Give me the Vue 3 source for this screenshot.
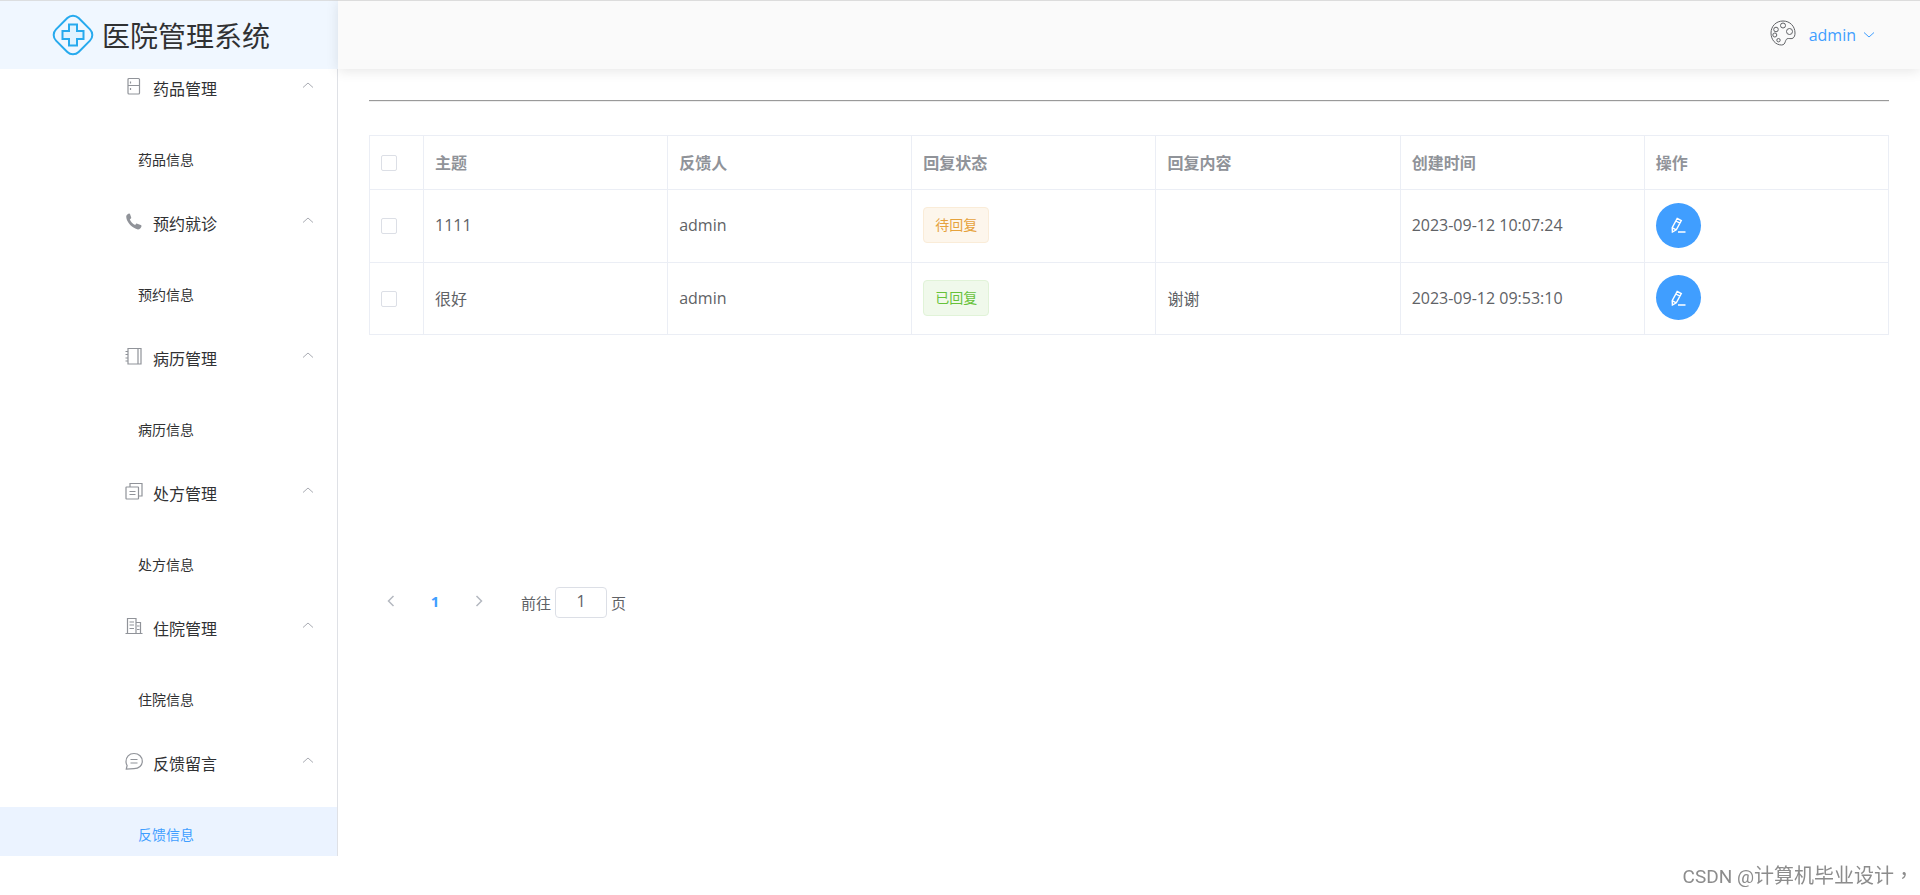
<script setup>
import { ref } from 'vue'

const groups = [
  { icon: 'fridge', title: '药品管理', child: '药品信息' },
  { icon: 'phone', title: '预约就诊', child: '预约信息' },
  { icon: 'notebook', title: '病历管理', child: '病历信息' },
  { icon: 'copy', title: '处方管理', child: '处方信息' },
  { icon: 'building', title: '住院管理', child: '住院信息' },
  { icon: 'chat', title: '反馈留言', child: '反馈信息', active: true }
]

const rows = ref([
  { id: 1, subject: '1111', user: 'admin', status: '待回复', type: 'warning', reply: '', time: '2023-09-12 10:07:24', checked: false },
  { id: 2, subject: '很好', user: 'admin', status: '已回复', type: 'success', reply: '谢谢', time: '2023-09-12 09:53:10', checked: false }
])
const allChecked = ref(false)
const page = ref('1')

function toggleAll() {
  rows.value.forEach((row) => { row.checked = allChecked.value })
}
</script>

<template>
  <div class="layout">
    <aside class="sidebar">
      <div class="brand">
        <svg class="brand-logo" viewBox="0 0 42 42" aria-hidden="true">
          <rect x="5" y="5" width="32" height="32" rx="8" transform="rotate(45 21 21)" />
          <path class="cross" d="M17 10.500h8v6.500h6.500v8H25v6.500h-8V25h-6.500v-8H17z" />
        </svg>
        <span class="brand-name">医院管理系统</span>
      </div>
      <div class="menu-view">
        <nav class="menu">
          <div v-for="group in groups" :key="group.title">
            <button type="button" class="menu-title" aria-expanded="true">
              <svg class="menu-icon" viewBox="0 0 18 18" aria-hidden="true">
                <g v-if="group.icon === 'fridge'">
                  <rect x="3" y="1.500" width="11.500" height="15.500" rx="1" />
                  <path d="M3 8.500h11.500M5.500 4.500v2M5.500 11v2" />
                </g>
                <path
                  v-else-if="group.icon === 'phone'"
                  class="solid"
                  d="M1.200 4.800C1.300 3.200 2.500 2 4 1.600c.5-.1.900.1 1.100.6l1.100 3.200c.1.500 0 .9-.4 1.200l-1 .8c1.200 2.400 2.800 4.300 5.300 5.500l.9-.9c.3-.4.7-.5 1.200-.3l3.600 1.300c.6.200.8.600.7 1.200-.5 1.700-1.700 3.100-3.600 3.200C7.700 16.400 1.500 10.800 1.200 4.800z"
                />
                <g v-else-if="group.icon === 'notebook'">
                  <path d="M3 1.500h13v15.500H3zM13 1.500v15.500M.500 4.500h3M.500 7.500h3M.500 11h3M.500 14h3" />
                </g>
                <g v-else-if="group.icon === 'copy'">
                  <rect x="1" y="5" width="12.500" height="12" rx=".5" />
                  <path d="M5 5V1.500h12v12.500h-3.500M4.500 9.500h6M4.500 12.500h6" />
                </g>
                <g v-else-if="group.icon === 'building'">
                  <path d="M.500 16.500h17M2.500 16.500v-15h8.500v15M11 5.500h4.500v11M4.500 5h4.500M4.500 8h4.500M4.500 11.500h4.500M12 9h2.500M12 12.500h2.500" />
                </g>
                <g v-else>
                  <path d="M1.300 17 2.100 13.500A7.500 7.500 0 0 1 1 9.500C1 5 4 1.500 9 1.500s8.300 3.500 8.300 7.700-3.300 7.500-8.300 7.500z" />
                  <path d="M5.500 7.500h7M5.500 11h7" />
                </g>
              </svg>
              <span class="menu-text">{{ group.title }}</span>
              <svg class="menu-arrow" viewBox="0 0 12 6" aria-hidden="true"><path d="M1 5.500 6 1l5 4.500" /></svg>
            </button>
            <a href="#" class="menu-item" :class="{ active: group.active }" @click.prevent>{{ group.child }}</a>
          </div>
        </nav>
      </div>
    </aside>

    <div class="page">
      <header class="topbar">
        <button type="button" class="theme" aria-label="主题">
          <svg viewBox="0 0 26 26" aria-hidden="true">
            <path d="M13 1C6 1 1 6.300 1 13c0 6.800 4.600 12 10.500 12 5 0 2.800-6.500 6.800-6.500 2.400 0 3.200.500 4.700-.400 1.400-.9 2-2.700 2-5.100C25 6.300 20 1 13 1z" />
            <circle cx="13" cy="5.500" r="2.500" />
            <circle cx="19.500" cy="11.500" r="3" />
            <circle cx="6" cy="9.500" r="2.300" />
            <circle cx="4.800" cy="15" r="2" />
            <circle cx="8.500" cy="20.200" r="1.700" />
          </svg>
        </button>
        <button type="button" class="user">
          <span>admin</span>
          <svg viewBox="0 0 12 6" aria-hidden="true"><path d="M1 .500 6 5l5-4.500" /></svg>
        </button>
      </header>

      <main class="content">
        <hr class="rule" />
        <table class="grid">
          <colgroup>
            <col class="col-check" />
            <col v-for="n in 6" :key="n" />
          </colgroup>
          <thead>
            <tr>
              <th><input v-model="allChecked" type="checkbox" class="check" aria-label="全选" @change="toggleAll" /></th>
              <th>主题</th>
              <th>反馈人</th>
              <th>回复状态</th>
              <th>回复内容</th>
              <th>创建时间</th>
              <th>操作</th>
            </tr>
          </thead>
          <tbody>
            <tr v-for="row in rows" :key="row.id">
              <td><input v-model="row.checked" type="checkbox" class="check" :aria-label="row.subject" /></td>
              <td>{{ row.subject }}</td>
              <td>{{ row.user }}</td>
              <td><span class="tag" :class="row.type">{{ row.status }}</span></td>
              <td>{{ row.reply }}</td>
              <td>{{ row.time }}</td>
              <td>
                <button type="button" class="edit" aria-label="编辑">
                  <svg viewBox="0 0 16 16" aria-hidden="true">
                    <path d="M7.200 1.500 11.300 3.500 6.300 12.800 2.400 15 2.200 10.600zM5.800 4l4.200 2.200M2.300 10.800l4 2.100M8 15H15.500" />
                  </svg>
                </button>
              </td>
            </tr>
          </tbody>
        </table>

        <div class="pagination">
          <button type="button" class="pager" aria-label="上一页" disabled>
            <svg viewBox="0 0 8 12" aria-hidden="true"><path d="M6.500 1 1.500 6l5 5" /></svg>
          </button>
          <button type="button" class="pager current">1</button>
          <button type="button" class="pager" aria-label="下一页" disabled>
            <svg viewBox="0 0 8 12" aria-hidden="true"><path d="m1.500 1 5 5-5 5" /></svg>
          </button>
          <label class="jump">前往<input v-model="page" type="text" class="jump-input" />页</label>
        </div>
      </main>
    </div>

    <div class="watermark"><span class="latin">CSDN @</span>计算机毕业设计<span class="comma">，</span></div>
  </div>
</template>

<style>
body {
  background: #fff;
}
</style>

<style scoped>
.layout {
  display: flex;
  align-items: flex-start;
  font-family: "Open Sans", "Noto Sans CJK SC", sans-serif;
  font-size: 16px;
  color: #303133;
}

.layout *,
.layout {
  box-sizing: border-box;
}

button {
  padding: 0;
  border: 0;
  background: none;
  font: inherit;
  color: inherit;
  cursor: pointer;
}

svg {
  display: block;
  fill: none;
  stroke: currentColor;
}

.sidebar {
  flex: 0 0 338px;
}

.brand {
  display: flex;
  align-items: center;
  gap: 8px;
  height: 69px;
  padding-left: 52px;
  border-top: 1px solid #dcdee0;
  background: #f0f7ff;
}

.brand-logo {
  width: 42px;
  height: 42px;
  color: #27aaee;
  stroke-width: 2;
}

.cross {
  fill: #e0f3ff;
}

.brand-name {
  padding-top: 2px;
  font-size: 28px;
  line-height: 40px;
}

.menu-view {
  overflow: hidden;
  border-right: 1px solid #dfe1e6;
}

.menu {
  margin-top: -23px;
}

.menu-title {
  display: flex;
  align-items: center;
  width: 100%;
  height: 86px;
  padding: 0 23px 0 125px;
}

.menu-icon {
  width: 18px;
  height: 18px;
  margin: 0 10px 6px 0;
  color: #909399;
  stroke-width: 1.2;
}

.menu-icon .solid {
  fill: currentColor;
  stroke: none;
}

.menu-text {
  padding-bottom: 3px;
}

.menu-arrow {
  width: 12px;
  height: 6px;
  margin: 0 0 8px auto;
  color: #a8abb2;
}

.menu-item {
  display: flex;
  align-items: center;
  height: 49px;
  padding: 5px 0 0 138px;
  font-size: 14px;
  color: #303133;
  text-decoration: none;
}

.menu-item.active {
  background: #ebf3ff;
  color: #409eff;
}

.page {
  flex: 1;
  min-width: 0;
}

.topbar {
  display: flex;
  align-items: center;
  justify-content: flex-end;
  gap: 13px;
  height: 69px;
  padding-right: 45px;
  border-top: 1px solid #dcdcdc;
  background: #fafafa;
  box-shadow: 0 2px 12px rgba(0, 0, 0, 0.1);
}

.theme {
  width: 26px;
  height: 26px;
  margin-bottom: 4px;
  color: #606266;
}

.user {
  display: flex;
  align-items: center;
  gap: 7px;
  color: #409eff;
}

.user svg {
  width: 12px;
  height: 6px;
}

.content {
  padding: 31px 31px 0;
}

.rule {
  height: 2px;
  margin: 0;
  border: 0;
  border-top: 1px solid #9a9a9a;
  border-bottom: 1px solid #eee;
}

.grid {
  width: 100%;
  margin-top: 33px;
  table-layout: fixed;
  border-collapse: collapse;
  color: #606266;
}

.col-check {
  width: 54px;
}

th,
td {
  height: 73px;
  padding: 0 11px 2px;
  border: 1px solid #ebeef5;
  text-align: left;
}

tbody tr:last-child td {
  height: 72px;
}

th {
  height: 54px;
  color: #909399;
  font-weight: 700;
}

th:first-child,
td:first-child {
  padding-bottom: 0;
}

.check {
  display: block;
  width: 16px;
  height: 16px;
  margin: 0;
  appearance: none;
  border: 1px solid #dcdfe6;
  border-radius: 2px;
  background: #fff;
}

.check:checked {
  border-color: #409eff;
  background: #409eff;
}

.tag {
  display: block;
  width: max-content;
  padding: 0 11px;
  border: 1px solid;
  border-radius: 4px;
  font-size: 14px;
  line-height: 34px;
}

.tag.warning {
  border-color: #faecd8;
  background: #fdf6ec;
  color: #e6a23c;
}

.tag.success {
  border-color: #e1f3d8;
  background: #f0f9eb;
  color: #67c23a;
}

.edit {
  display: flex;
  align-items: center;
  justify-content: center;
  width: 45px;
  height: 45px;
  border-radius: 50%;
  background: #409eff;
  color: #fff;
}

.edit svg {
  width: 16px;
  height: 16px;
  stroke-width: 1.4;
}

.pagination {
  display: flex;
  align-items: center;
  height: 32px;
  margin-top: 251px;
  color: #606266;
  font-size: 15px;
}

.pager {
  display: flex;
  align-items: center;
  justify-content: center;
  width: 44px;
  height: 32px;
  padding-bottom: 2px;
  color: #b4b8c0;
}

.pager svg {
  width: 8px;
  height: 12px;
  stroke-width: 1.5;
}

.pager.current {
  color: #409eff;
  font-weight: 700;
}

.jump {
  display: flex;
  align-items: center;
  gap: 4px;
  margin-left: 20px;
}

.jump-input {
  width: 52px;
  height: 31px;
  padding: 0 0 2px;
  border: 1px solid #dcdfe6;
  border-radius: 4px;
  background: #fff;
  font: inherit;
  font-size: 16px;
  color: inherit;
  text-align: center;
}

.watermark {
  position: fixed;
  right: 6px;
  bottom: 4px;
  font-size: 20px;
  line-height: 28px;
  color: #8c8c8c;
}

.latin {
  font-family: Roboto, sans-serif;
  font-size: 19px;
}

.comma {
  font-family: "Noto Sans CJK TC", sans-serif;
}
</style>
